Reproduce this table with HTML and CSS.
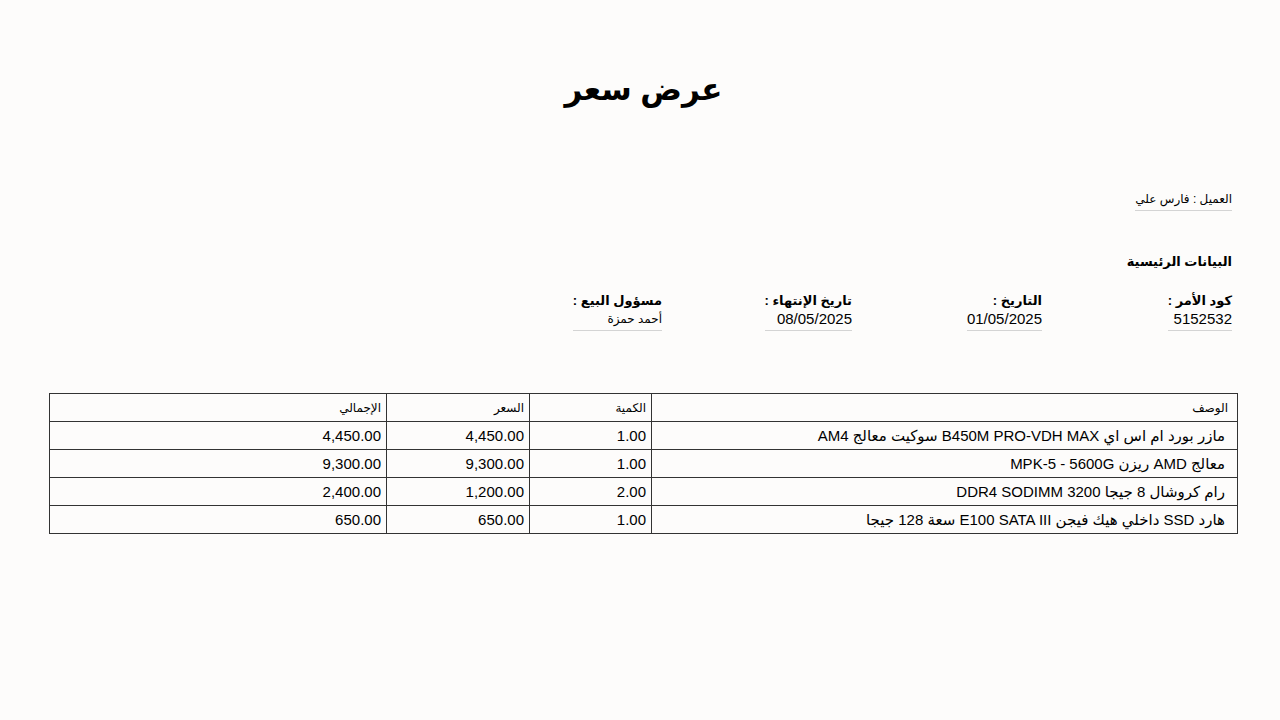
FILE: index.html
```html
<!DOCTYPE html>
<html lang="ar" dir="rtl">
<head>
<meta charset="utf-8">
<title>عرض سعر</title>
<link rel="stylesheet" href="styles.css">
</head>
<body>
<div class="page">
  <h1 class="title">عرض سعر</h1>
  <div class="customer"><span class="field-line">العميل : فارس علي</span></div>
  <h2 class="section">البيانات الرئيسية</h2>
  <div class="fields">
    <div class="field"><div class="label">كود الأمر :</div><div class="value">5152532</div></div>
    <div class="field"><div class="label">التاريخ :</div><div class="value">01/05/2025</div></div>
    <div class="field"><div class="label">تاريخ الإنتهاء :</div><div class="value">08/05/2025</div></div>
    <div class="field"><div class="label">مسؤول البيع :</div><div class="value small">أحمد حمزة</div></div>
  </div>
  <table class="items">
    <colgroup>
      <col class="c-desc"><col class="c-qty"><col class="c-price"><col class="c-total">
    </colgroup>
    <thead>
      <tr><th class="desc">الوصف</th><th>الكمية</th><th>السعر</th><th>الإجمالي</th></tr>
    </thead>
    <tbody>
      <tr><td class="desc">مازر بورد ام اس اي B450M PRO-VDH MAX سوكيت معالج AM4</td><td>1.00</td><td>4,450.00</td><td>4,450.00</td></tr>
      <tr><td class="desc">معالج AMD ريزن MPK-5 - 5600G</td><td>1.00</td><td>9,300.00</td><td>9,300.00</td></tr>
      <tr><td class="desc">رام كروشال 8 جيجا DDR4 SODIMM 3200</td><td>2.00</td><td>1,200.00</td><td>2,400.00</td></tr>
      <tr><td class="desc">هارد SSD داخلي هيك فيجن E100 SATA III سعة 128 جيجا</td><td>1.00</td><td>650.00</td><td>650.00</td></tr>
    </tbody>
  </table>
</div>
</body>
</html>
```
FILE: styles.css
```css
html, body {
  margin: 0;
  padding: 0;
  background: #fdfcfb;
}
body {
  font-family: "Liberation Sans", Arial, "DejaVu Sans", sans-serif;
  color: #000;
}
.page {
  padding: 0 42px 0 49px;
}
.title {
  margin: 0;
  padding-top: 68px;
  text-align: center;
  font-size: 31px;
  font-weight: bold;
  line-height: 44px;
}
.customer {
  margin-top: 79px;
  padding-right: 6px;
  font-size: 12px;
}
.field-line {
  display: inline-block;
  line-height: 16px;
  padding-bottom: 3px;
  border-bottom: 1px solid #d4d4d4;
}
.section {
  margin: 43px 0 0;
  padding-right: 6px;
  font-size: 13px;
  font-weight: bold;
  line-height: 16px;
}
.fields {
  margin-top: 23px;
  padding-right: 6px;
  display: grid;
  grid-template-columns: repeat(4, 190px);
  justify-items: start;
}
.field {
  display: flex;
  flex-direction: column;
  align-items: stretch;
}
.label {
  font-size: 13px;
  font-weight: bold;
  line-height: 16px;
}
.value {
  margin-top: 1px;
  font-size: 15px;
  line-height: 18px;
  padding-bottom: 2px;
  border-bottom: 1px solid #d4d4d4;
}
.value.small {
  font-size: 12px;
}
.items {
  margin-top: 62px;
  width: 100%;
  border-collapse: collapse;
  table-layout: fixed;
}
.c-desc { width: 586px; }
.c-qty { width: 122px; }
.c-price { width: 143px; }
.c-total { width: auto; }
.items th, .items td {
  border: 1px solid #333;
  text-align: right;
  padding: 0 5px;
  height: 27px;
  white-space: nowrap;
}
.items th.desc { padding-right: 9px; }
.items td.desc { padding-right: 12px; }
.items th {
  font-size: 12px;
  font-weight: normal;
}
.items td {
  font-size: 15px;
}
```
